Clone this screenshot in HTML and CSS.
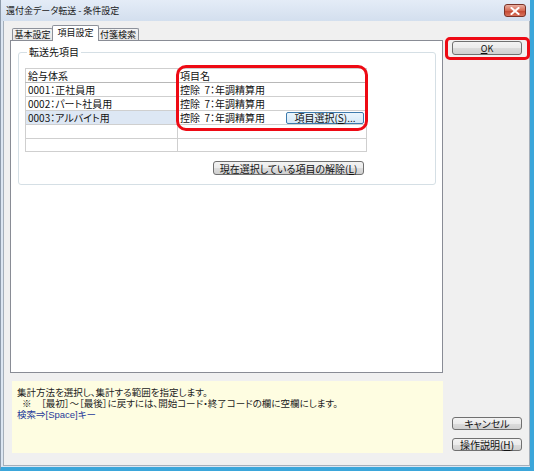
FILE: index.html
```html
<!DOCTYPE html>
<html lang="ja">
<head>
<meta charset="utf-8">
<link rel="stylesheet" href="styles.css">
</head>
<body>
<div class="window">
  <div class="titlebar">
    <span class="title">還付金データ転送 - 条件設定</span>
    <span class="close">
      <svg width="10" height="8" viewBox="0 0 10 8"><path d="M1.5 1 L8.5 7 M8.5 1 L1.5 7" stroke="#fff" stroke-width="2" stroke-linecap="square"/></svg>
    </span>
  </div>
  <div class="client">
    <div class="main">
      <div class="tabs">
        <div class="tab first">基本設定</div>
        <div class="tab active">項目設定</div>
        <div class="tab last">付箋検索</div>
      </div>
      <div class="panel">
        <fieldset class="group">
          <legend>転送先項目</legend>
          <div class="grid-wrap">
            <table class="grid">
              <colgroup><col class="c1"><col class="c2"></colgroup>
              <tr class="head"><td>給与体系</td><td>項目名</td></tr>
              <tr><td>0001：正社員用</td><td>控除&nbsp;&nbsp;7：年調精算用</td></tr>
              <tr><td>0002：パート社員用</td><td>控除&nbsp;&nbsp;7：年調精算用</td></tr>
              <tr class="sel"><td class="selcell">0003：アルバイト用</td><td><div class="editcell"><span>控除&nbsp;&nbsp;7：年調精算用</span><span class="pick">項目選択(<u>S</u>)...</span></div></td></tr>
              <tr><td></td><td></td></tr>
              <tr class="short"><td></td><td></td></tr>
            </table>
            <div class="hl hl-grid"></div>
          </div>
          <div class="clear-row"><button class="btn clear">現在選択している項目の解除(<u>L</u>)</button></div>
        </fieldset>
      </div>
      <div class="help">
        <div class="line">集計方法を選択し、集計する範囲を指定します。</div>
        <div class="line note">※　［最初］～［最後］に戻すには、開始コード・終了コードの欄に空欄にします。</div>
        <div class="line link">検索⇒[Space]キー</div>
      </div>
    </div>
    <div class="side">
      <div class="ok-wrap">
        <button class="btn ok"><u>O</u>K</button>
        <div class="hl hl-ok"></div>
      </div>
      <button class="btn cancel">キャンセル</button>
      <button class="btn manual">操作説明(<u>H</u>)</button>
    </div>
  </div>
</div>
</body>
</html>
```

FILE: styles.css
```css
* { box-sizing: border-box; }
html, body { margin: 0; padding: 0; }
body {
  width: 534px;
  height: 471px;
  overflow: hidden;
  font-family: "Noto Sans CJK JP", "Liberation Sans", sans-serif;
  font-size: 10px;
  color: #111;
  font-feature-settings: "palt";
}
.window {
  width: 534px;
  height: 471px;
  display: flex;
  flex-direction: column;
  background: #dce6f2;
  border-left: 1px solid #8e9bab;
  border-right: 4px solid #3ba6da;
  border-bottom: 4px solid #3ba6da;
}
.titlebar {
  height: 21px;
  flex: none;
  display: flex;
  align-items: center;
  justify-content: space-between;
  padding: 0 4px 0 5px;
  background: linear-gradient(#e4ecf7, #d3dfee);
}
.title { font-size: 9px; color: #1a1a1a; line-height: 12px; white-space: nowrap; }
.close {
  width: 22px;
  height: 13px;
  border: 1px solid #7a3328;
  border-radius: 3px;
  background: linear-gradient(#eab0a2, #d56a54 50%, #c2452e 51%, #d8725c);
  display: flex;
  align-items: center;
  justify-content: center;
}
.client {
  flex: 1;
  display: flex;
  margin: 0 0 1px 2px;
  border: 1px solid #a5afba;
  border-top: none;
  background: #f0f0f0;
  padding-top: 4px;
}
.main {
  width: 433px;
  margin-left: 6px;
  display: flex;
  flex-direction: column;
}
.tabs {
  height: 15px;
  display: flex;
  align-items: flex-end;
  padding-left: 2px;
  position: relative;
  z-index: 1;
}
.tab {
  height: 12px;
  line-height: 11px;
  font-size: 9px;
  white-space: nowrap;
  text-align: center;
  border: 1px solid #8d919a;
  border-bottom: none;
  background: linear-gradient(#f4f4f4, #e6e6e6);
  border-radius: 2px 2px 0 0;
}
.tab.first { width: 41px; }
.tab.active {
  width: 47px;
  height: 16px;
  margin-left: -1px;
  margin-bottom: -1px;
  background: #fff;
  line-height: 13px;
  position: relative;
}
.tab.last { width: 41px; margin-left: -1px; border-left: none; }
.panel {
  height: 333px;
  border: 1px solid #898c95;
  background: #fff;
  padding: 5px 6px 0 7px;
}
.group {
  margin: 0;
  border: 1px solid #d5dfe5;
  border-radius: 3px;
  padding: 10px 6px 9px 6px;
}
.group legend {
  padding: 0 2px;
  margin-left: 2px;
  font-size: 10px;
  line-height: 12px;
}
.grid-wrap { position: relative; width: 341px; }
.grid {
  width: 341px;
  border-collapse: collapse;
  table-layout: fixed;
  border: 1px solid #a7a7a7;
}
.grid col.c1 { width: 152px; }
.grid col.c2 { width: 189px; }
.grid td {
  height: 14px;
  padding: 0 0 0 2px;
  border: 1px solid #cfcfcf;
  line-height: 12px;
  font-size: 10px;
  white-space: nowrap;
  overflow: hidden;
}
.grid tr.head td { border-bottom-color: #b8b8b8; }
.grid tr.short td { height: 13px; }
.grid td.selcell { background: #dde7f4; }
.editcell {
  display: flex;
  align-items: center;
  justify-content: space-between;
}
.pick {
  width: 78px;
  height: 12px;
  line-height: 10px;
  text-align: center;
  border: 1px solid #3d7bad;
  border-radius: 2px;
  background: linear-gradient(#eaf5fd, #d4e9f8);
  margin-right: 2px;
}
.hl {
  position: absolute;
  border: 3px solid #ee0a14;
  pointer-events: none;
}
.hl-grid {
  left: 151px;
  top: -3px;
  width: 192px;
  height: 66px;
  border-radius: 10px;
}
.clear-row {
  width: 341px;
  display: flex;
  justify-content: flex-end;
  padding-right: 2px;
  margin-top: 9px;
}
.btn {
  display: block;
  margin: 0;
  padding: 0;
  font-family: inherit;
  font-size: 10px;
  font-weight: normal;
  line-height: 11px;
  color: #111;
  border: 1px solid #707070;
  border-radius: 3px;
  background: linear-gradient(#f3f3f3, #ebebeb 50%, #dcdcdc 51%, #d0d0d0);
  font-feature-settings: "palt";
}
.clear { width: 151px; height: 14px; }
.help {
  margin-top: 8px;
  margin-left: 2px;
  height: 72px;
  background: #fefde1;
  padding: 6px 0 0 5px;
  font-family: "Liberation Sans", "Noto Sans CJK JP", sans-serif;
  font-size: 9.5px;
  color: #222;
}
.help .line { height: 11px; line-height: 11px; white-space: nowrap; }
.help .note { padding-left: 5px; }
.help .link { color: #1f3a9a; }
.side {
  width: 70px;
  margin-left: 9px;
  display: flex;
  flex-direction: column;
  padding-bottom: 14px;
}
.ok-wrap { position: relative; margin-top: 16px; }
.ok { width: 70px; height: 14px; font-size: 9px; }
.hl-ok {
  left: -7px;
  top: -4px;
  right: -8px;
  bottom: -5px;
  border-radius: 5px;
}
.cancel { width: 70px; height: 13px; margin-top: auto; }
.manual { width: 70px; height: 13px; margin-top: 8px; }
```
